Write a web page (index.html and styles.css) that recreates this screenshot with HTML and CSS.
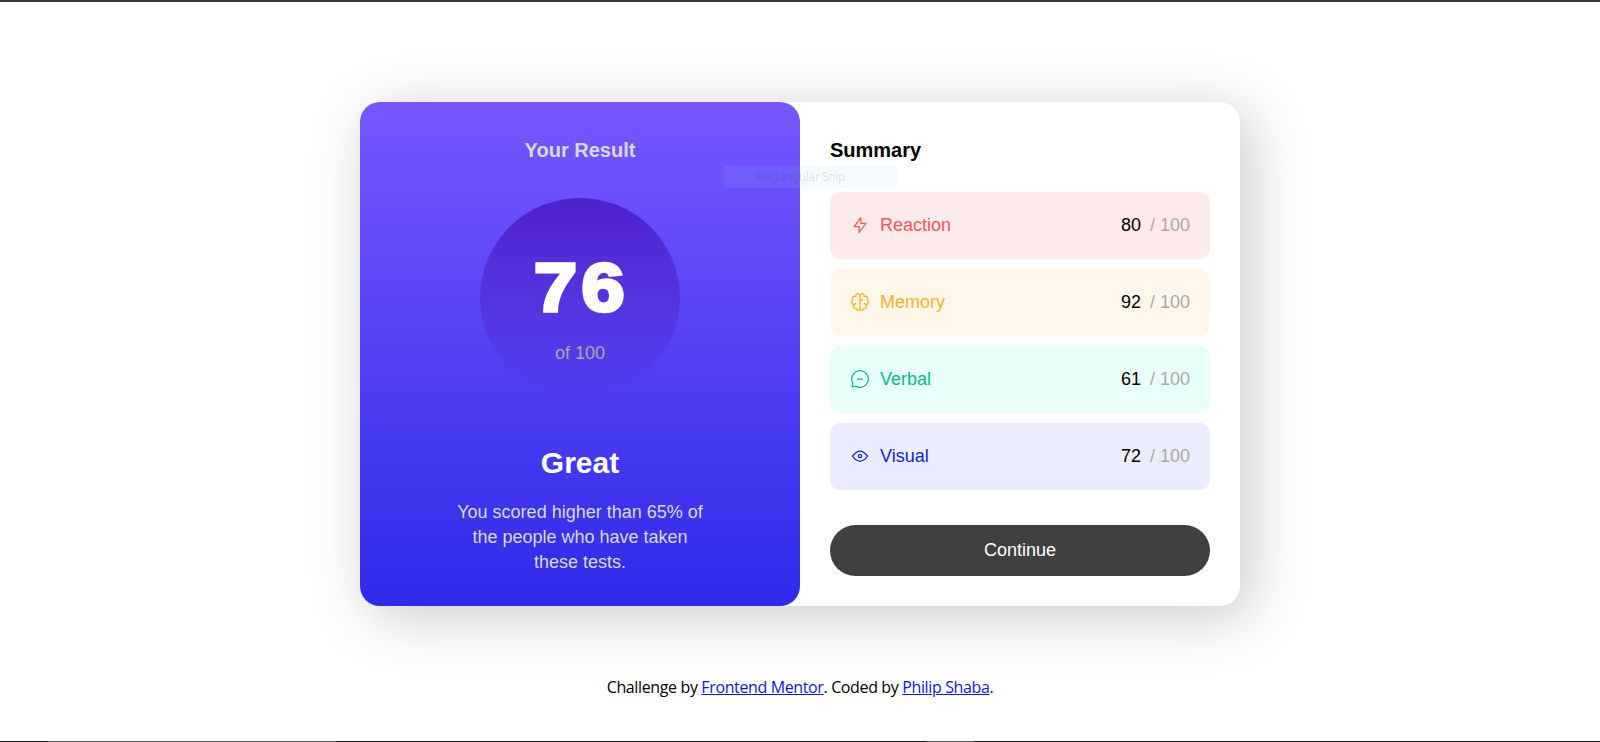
FILE: index.html
```html
<!DOCTYPE html>
<html lang="en">
<head>
<meta charset="utf-8">
<title>Results summary</title>
<link rel="stylesheet" href="styles.css">
</head>
<body>
<div class="top-edge"></div>
<main class="card">
  <section class="result">
    <h2 class="result-title">Your Result</h2>
    <div class="circle">
      <span class="score">76</span>
      <span class="of">of 100</span>
    </div>
    <h1 class="verdict">Great</h1>
    <p class="note">You scored higher than 65% of the people who have taken these tests.</p>
  </section>
  <section class="summary">
    <h2 class="summary-title">Summary</h2>
    <ul class="rows">
      <li class="row reaction">
        <svg class="icon" viewBox="0 0 20 20"><path d="M10.833 8.333V2.5l-6.666 9.167h5V17.5l6.666-9.167h-5Z"/></svg>
        <span class="label">Reaction</span><span class="value">80</span><span class="max">/ 100</span>
      </li>
      <li class="row memory">
        <svg class="icon" viewBox="0 0 20 20"><path d="M5.833 11.667a2.5 2.5 0 1 0 .834 4.858"/><path d="M3.553 13.004a3.333 3.333 0 0 1-.728-5.53m.025-.067a2.083 2.083 0 0 1 2.983-2.824m.199.054A2.083 2.083 0 1 1 10 3.75v12.917a1.667 1.667 0 0 1-3.333 0M10 5.833a2.5 2.5 0 0 0 2.5 2.5m1.667 3.334a2.5 2.5 0 1 1-.834 4.858"/><path d="M16.447 13.004a3.334 3.334 0 0 0 .728-5.53m-.025-.067a2.083 2.083 0 0 0-2.983-2.824M10 3.75a2.085 2.085 0 0 1 2.538-2.033 2.084 2.084 0 0 1 1.43 2.92m-.635 12.03a1.667 1.667 0 0 1-3.333 0"/></svg>
        <span class="label">Memory</span><span class="value">92</span><span class="max">/ 100</span>
      </li>
      <li class="row verbal">
        <svg class="icon" viewBox="0 0 20 20"><path d="M7.5 10h5M10 18.333A8.333 8.333 0 1 0 1.667 10c0 1.518.406 2.942 1.115 4.167l-.699 3.75 3.75-.699A8.295 8.295 0 0 0 10 18.333Z"/></svg>
        <span class="label">Verbal</span><span class="value">61</span><span class="max">/ 100</span>
      </li>
      <li class="row visual">
        <svg class="icon" viewBox="0 0 20 20"><path d="M10 11.667a1.667 1.667 0 1 0 0-3.334 1.667 1.667 0 0 0 0 3.334Z"/><path d="M17.5 10c-1.574 2.492-4.402 5-7.5 5s-5.926-2.508-7.5-5C4.416 7.632 6.66 5 10 5s5.584 2.632 7.5 5Z"/></svg>
        <span class="label">Visual</span><span class="value">72</span><span class="max">/ 100</span>
      </li>
    </ul>
    <button class="continue">Continue</button>
  </section>
  <div class="snip">Rectangular Snip</div>
</main>
<footer class="credit">Challenge by <a href="#">Frontend Mentor</a>. Coded by <a href="#">Philip Shaba</a>.</footer>
<div class="bottom-edge"><span class="seg seg-wide"></span><span class="seg seg-small"></span></div>
</body>
</html>
```
FILE: styles.css
```css
* { box-sizing: border-box; margin: 0; padding: 0; }
body {
  height: 742px;
  overflow: hidden;
  display: flex;
  flex-direction: column;
  align-items: center;
  background: #fff;
  font-family: "Liberation Sans", Arial, sans-serif;
  font-size: 18px;
}
.top-edge { width: 100%; height: 2px; background: #3a3839; }
.card {
  position: relative;
  display: flex;
  width: 880px;
  height: 504px;
  margin-top: 100px;
  border-radius: 20px;
  background: #fff;
  box-shadow: 10px 10px 60px rgba(0, 0, 0, .21);
}
.result {
  width: 440px;
  display: flex;
  flex-direction: column;
  align-items: center;
  padding-top: 37px;
  border-radius: 20px;
  background: linear-gradient(#7857ff, #2e2be9);
  text-align: center;
}
.result-title { font-size: 20px; line-height: 22px; color: #d9d9d9; }
.circle {
  width: 200px;
  height: 200px;
  margin-top: 37px;
  padding-top: 50px;
  display: flex;
  flex-direction: column;
  align-items: center;
  border-radius: 50%;
  background: linear-gradient(hsl(256, 72%, 46%), hsla(241, 72%, 46%, 0));
}
.score {
  padding-left: 3px;
  font-size: 69px;
  font-weight: 700;
  line-height: 80px;
  letter-spacing: 4px;
  color: #fff;
  -webkit-text-stroke: 3.5px #fff;
  transform: scaleX(1.12);
}
.of { margin-top: 15px; line-height: 20px; color: #a9a9a9; }
.verdict { margin-top: 48px; font-size: 30px; line-height: 34px; color: #fff; }
.note { width: 250px; margin-top: 20px; line-height: 25px; color: #d9d9d9; }
.summary { flex: 1; padding: 37px 30px 30px; }
.summary-title { font-size: 20px; line-height: 22px; color: #000; }
.rows { list-style: none; display: grid; gap: 10px; margin-top: 31px; }
.row {
  display: flex;
  align-items: center;
  gap: 10px;
  height: 67px;
  padding: 0 20px;
  border-radius: 10px;
}
.icon {
  width: 20px;
  height: 20px;
  margin-bottom: 1px;
  fill: none;
  stroke: currentColor;
  stroke-width: 1.25;
  stroke-linecap: round;
  stroke-linejoin: round;
}
.label { flex: 1; }
.value { margin-right: -1px; color: #000; }
.max { color: #a9a9a9; }
.reaction { background: #ffeaeb; color: #f55; }
.memory { background: #fff7ea; color: #ffb21e; }
.verbal { background: #e8fffa; color: #00bb8f; }
.visual { background: #ebecfd; color: #1125d6; }
.continue {
  display: block;
  width: 380px;
  height: 51px;
  margin-top: 35px;
  border: 0;
  border-radius: 30px;
  background: #404040;
  color: #fff;
  font: inherit;
}
.snip {
  position: absolute;
  left: 364px;
  top: 64px;
  width: 173px;
  height: 22px;
  padding-left: 32px;
  background: rgba(155, 211, 247, .1);
  color: rgba(50, 0, 0, .12);
  font: 12px/22px "Noto Sans", sans-serif;
  letter-spacing: -.42px;
}
.credit {
  margin-top: 70px;
  font: 16px/22px "Open Sans", sans-serif;
  letter-spacing: -.37px;
  color: #000;
}
.credit a { color: #1414dc; }
.bottom-edge { display: flex; width: 100%; height: 1px; margin-top: auto; background: #1c1a1c; }
.seg { height: 1px; background: #565455; }
.seg-wide { width: 288px; margin-left: 48px; }
.seg-small { width: 48px; margin-left: 590px; }
```
